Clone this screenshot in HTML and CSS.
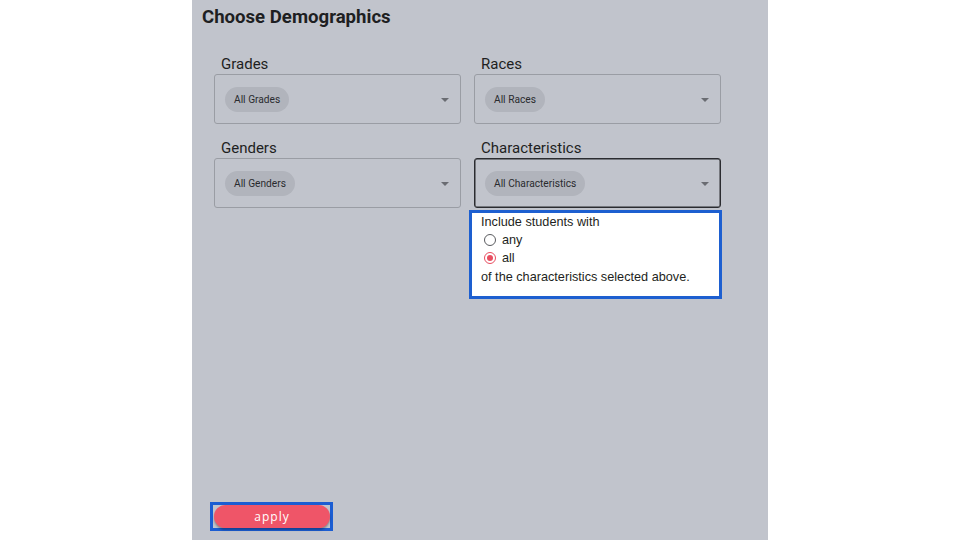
FILE: index.html
```html
<!DOCTYPE html>
<html>
<head>
<meta charset="utf-8">
<link rel="stylesheet" href="styles.css">
</head>
<body>
<div class="page">
  <div class="panel">
    <h1 class="title">Choose Demographics</h1>
    <div class="grid">
      <div class="field">
        <div class="label">Grades</div>
        <div class="select"><span class="chip">All Grades</span><span class="arrow"></span></div>
      </div>
      <div class="field">
        <div class="label">Races</div>
        <div class="select"><span class="chip">All Races</span><span class="arrow"></span></div>
      </div>
      <div class="field">
        <div class="label">Genders</div>
        <div class="select"><span class="chip">All Genders</span><span class="arrow"></span></div>
      </div>
      <div class="field">
        <div class="label">Characteristics</div>
        <div class="select active"><span class="chip">All Characteristics</span><span class="arrow"></span></div>
        <div class="popup">
          <div class="ptext">Include students with</div>
          <label class="radio"><span class="circle"></span>any</label>
          <label class="radio"><span class="circle checked"></span>all</label>
          <div class="ptext">of the characteristics selected above.</div>
        </div>
      </div>
    </div>
    <div class="footer">
      <div class="focus"><button class="apply">apply</button></div>
    </div>
  </div>
</div>
</body>
</html>
```
FILE: styles.css
```css
html, body {
  margin: 0;
  padding: 0;
  background: #ffffff;
}
.page {
  width: 960px;
  height: 540px;
  display: flex;
  justify-content: center;
}
.panel {
  width: 576px;
  height: 540px;
  background: #c1c4cc;
  display: flex;
  flex-direction: column;
  font-family: Roboto, "Liberation Sans", sans-serif;
  color: #1e1f22;
}
.title {
  margin: 0;
  padding: 6px 0 0 10px;
  font-size: 18.6px;
  font-weight: 700;
  line-height: 22px;
}
.grid {
  margin: 27px 0 0 22px;
  display: grid;
  grid-template-columns: 247px 247px;
  column-gap: 13px;
  row-gap: 15px;
}
.field {
  position: relative;
}
.label {
  font-size: 15px;
  line-height: 18px;
  padding-left: 7px;
  margin-bottom: 1px;
  color: #1e1f22;
}
.select {
  box-sizing: border-box;
  height: 50px;
  border: 1px solid #9a9da4;
  border-radius: 3px;
  display: flex;
  align-items: center;
  padding: 1px 10px 0 10px;
}
.select.active {
  border-color: #2b2c30;
  box-shadow: inset 0 0 0 0.5px #2b2c30;
}
.chip {
  height: 25px;
  line-height: 25px;
  padding: 0 9px;
  border-radius: 13px;
  background: #b1b4bc;
  font-size: 10.2px;
  color: #2a2b2e;
}
.arrow {
  margin-left: auto;
  margin-right: 1px;
  width: 0;
  height: 0;
  border-left: 4.5px solid transparent;
  border-right: 4.5px solid transparent;
  border-top: 4.5px solid #6a6c72;
}
.popup {
  position: absolute;
  left: -5px;
  top: 71px;
  width: 253px;
  height: 89px;
  box-sizing: border-box;
  border: 3px solid #1d5fd0;
  background: #ffffff;
  padding: 0 0 0 9px;
  font-family: "Liberation Sans", Arial, sans-serif;
  font-size: 12.7px;
  color: #1e1f22;
  z-index: 2;
}
.ptext {
  line-height: 18px;
}
.ptext:last-child {
  margin-top: 1px;
}
.radio {
  display: flex;
  align-items: center;
  height: 18px;
  padding-left: 3px;
}
.circle {
  box-sizing: border-box;
  width: 12px;
  height: 12px;
  border: 1px solid #5a5b5f;
  border-radius: 50%;
  margin-right: 6px;
  position: relative;
}
.circle.checked {
  border-color: #e84e60;
}
.circle.checked::after {
  content: "";
  position: absolute;
  left: 2px;
  top: 2px;
  width: 6px;
  height: 6px;
  border-radius: 50%;
  background: #e84e60;
}
.footer {
  margin-top: auto;
  padding: 0 0 9px 18px;
}
.focus {
  display: inline-block;
  border: 3px solid #1b5dd2;
  padding: 0 0 0 1px;
  width: 116px;
  height: 23px;
}
.apply {
  display: block;
  width: 116px;
  height: 23px;
  border: none;
  border-radius: 12px;
  background: #ef5568;
  color: #ffffff;
  font-family: "Open Sans", sans-serif;
  font-size: 12px;
  letter-spacing: 1px;
  padding: 0;
  box-shadow: 0 2px 2px rgba(0,0,0,0.3);
}
```
